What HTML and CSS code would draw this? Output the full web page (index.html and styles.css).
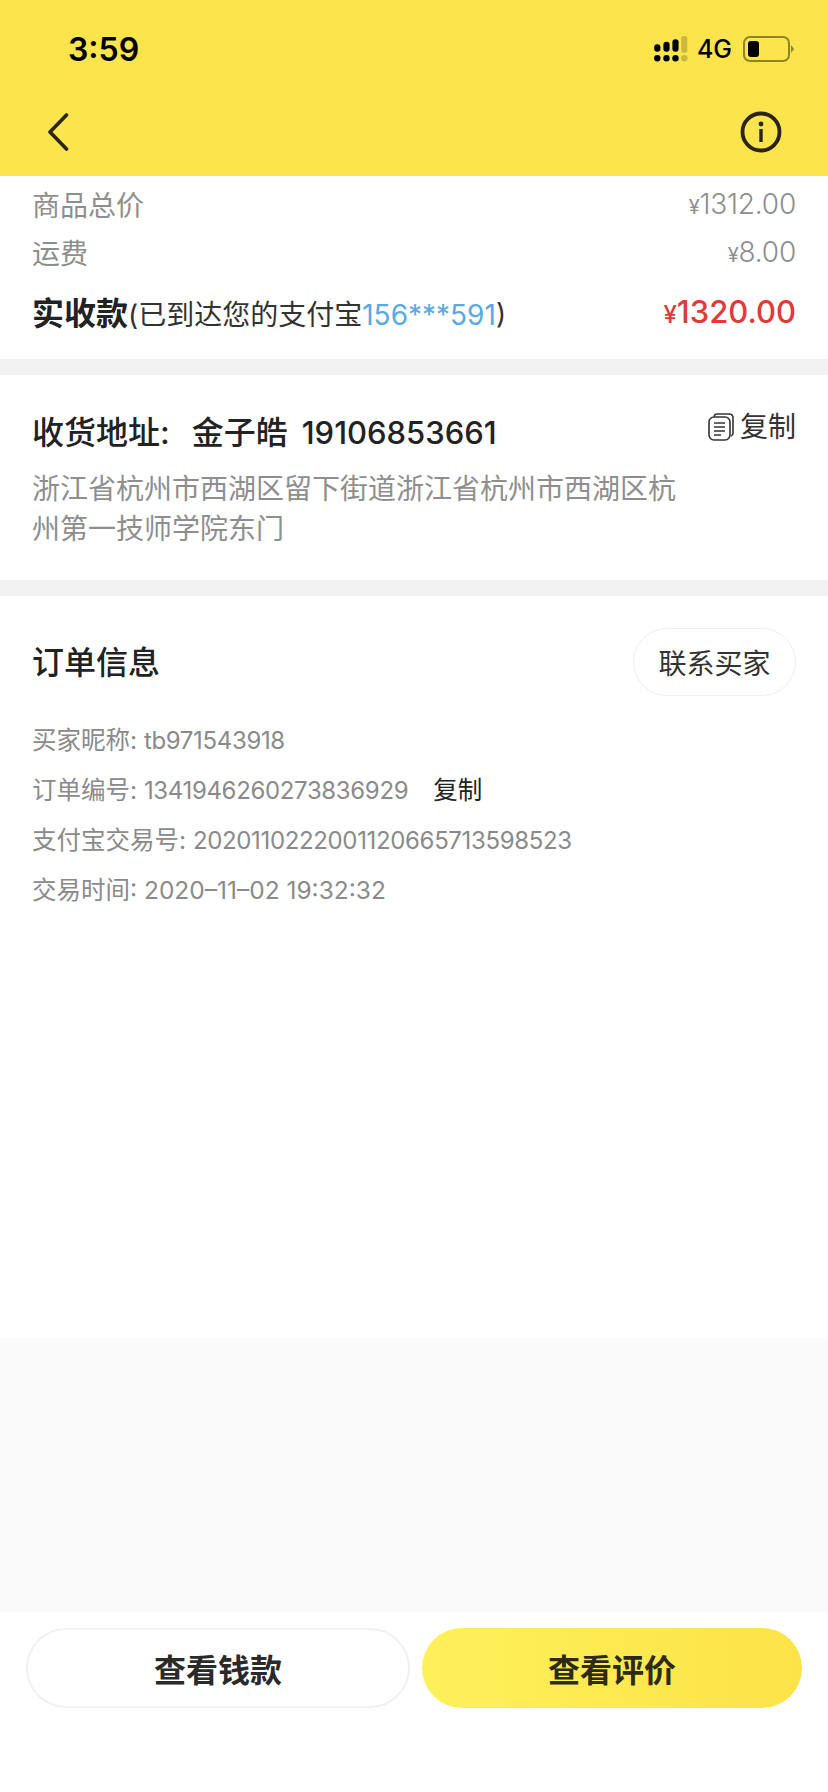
FILE: index.html
```html
<!DOCTYPE html>
<html lang="zh">
<head>
  <meta charset="UTF-8">
  <title>订单详情</title>
  <meta name="viewport" content="width=device-width, initial-scale=1">
  <link rel="stylesheet" href="styles.css">
</head>
<body>

<div class="page">
  <header class="top">
    <div class="status">
      <span class="time">3:59</span>
      <div class="status-right">
        <svg class="signal" width="34" height="26" viewBox="0 0 34 26">
          <g fill="#000">
            <rect x="0.200" y="8.300" width="6.200" height="7.400" rx="3"/><circle cx="3.300" cy="22.300" r="3.200"/>
            <rect x="9.400" y="5.700" width="6.200" height="10" rx="3"/><circle cx="12.500" cy="22.300" r="3.200"/>
            <rect x="18.400" y="3.300" width="6.200" height="12.400" rx="3"/><circle cx="21.500" cy="22.300" r="3.200"/>
          </g>
          <g fill="#c9b93f">
            <rect x="27.300" y="0" width="6" height="16.700" rx="2"/><circle cx="30.300" cy="22.300" r="3.200"/>
          </g>
        </svg>
        <span class="net">4G</span>
        <svg class="battery" width="51" height="26" viewBox="0 0 51 26">
          <rect x="1" y="1" width="45" height="24" rx="6" fill="none" stroke="#8f8425" stroke-width="2"/>
          <rect x="5" y="5" width="11" height="16" rx="3" fill="#000"/>
          <path d="M48 9l3 4-3 4z" fill="#8f8425"/>
        </svg>
      </div>
    </div>
    <nav class="nav">
      <svg width="24" height="40" viewBox="0 0 24 40">
        <path d="M18.500 3L2 20l16.500 17" fill="none" stroke="#2a2515" stroke-width="3.600" stroke-linecap="round" stroke-linejoin="round"/>
      </svg>
      <svg width="42" height="42" viewBox="0 0 42 42">
        <circle cx="21" cy="21" r="18.500" fill="none" stroke="#2a2515" stroke-width="3.800"/>
        <circle cx="21" cy="13" r="2.400" fill="#2a2515"/>
        <rect x="19.300" y="18" width="3.400" height="13" fill="#2a2515"/>
      </svg>
    </nav>
  </header>

  <section class="card price">
    <div class="row muted"><span>商品总价</span><span class="amount"><small>¥</small>1312.00</span></div>
    <div class="row muted"><span>运费</span><span class="amount"><small>¥</small>8.00</span></div>
    <div class="row total">
      <span><b>实收款</b>(已到达您的支付宝<a class="blue">156***591</a>)</span>
      <span class="red"><small>¥</small>1320.00</span>
    </div>
  </section>

  <section class="card address">
    <div class="addr-head">
      <h2>收货地址:<span class="name">金子皓</span><span class="phone">19106853661</span></h2>
      <div class="copy">
        <svg width="26" height="28" viewBox="0 0 26 28" fill="none" stroke="#333" stroke-width="1.600">
          <path d="M6 3.500C6.500 1.800 7.500 1 9 1h12c2.500 0 4 1.500 4 4v15c0 1.500-.5 2.500-2 3"/>
          <rect x="1" y="4" width="21" height="23" rx="5"/>
          <path d="M6 10h11M6 14h11M6 18h11M6 22h7"/>
        </svg>
        <span>复制</span>
      </div>
    </div>
    <p class="addr-text">浙江省杭州市西湖区留下街道浙江省杭州市西湖区杭州第一技师学院东门</p>
  </section>

  <section class="card info">
    <div class="info-head">
      <h2>订单信息</h2>
      <button class="contact">联系买家</button>
    </div>
    <ul class="info-list">
      <li>买家昵称: <span class="num">tb971543918</span></li>
      <li>订单编号: <span class="num">1341946260273836929</span><span class="info-copy">复制</span></li>
      <li>支付宝交易号: <span class="num">2020110222001120665713598523</span></li>
      <li>交易时间: 2020–11–02 19:32:32</li>
    </ul>
  </section>

  <div class="filler"></div>

  <footer class="bottom">
    <button class="btn">查看钱款</button>
    <button class="btn primary">查看评价</button>
  </footer>
</div>

</body>
</html>
```

FILE: styles.css
```css
* {
  box-sizing: border-box;
}

body {
  margin: 0;
  font-family: Inter, "Noto Sans CJK SC", sans-serif;
  background: #fff;
  color: #222;
}

.page {
  display: flex;
  flex-direction: column;
  width: 828px;
  height: 1792px;
  overflow: hidden;
  background: #f2f2f2;
}

.top {
  height: 176px;
  background: #fce44c;
  padding: 0 48px;
}

.status {
  display: flex;
  justify-content: space-between;
  align-items: center;
  height: 98px;
  margin-right: -14px;
  padding-left: 20px;
}

.time {
  font-size: 32px;
  font-weight: 600;
  color: #000;
}

.status-right {
  display: flex;
  align-items: center;
}

.signal {
  margin-right: 9px;
}

.net {
  font-size: 25px;
  font-weight: 500;
  color: #000;
  margin-right: 11px;
}

.nav {
  display: flex;
  justify-content: space-between;
  align-items: center;
  height: 36px;
  margin-right: -2px;
  margin-top: 16px;
}

.card {
  background: #fff;
  padding: 0 32px;
}

.row {
  display: flex;
  justify-content: space-between;
  align-items: center;
}

.price {
  height: 183px;
  padding-top: 4px;
}

.muted {
  height: 48px;
  font-size: 28px;
  color: #8e8e8e;
}

.amount {
  letter-spacing: -.2px;
  font-weight: 300;
}

.muted small {
  font-size: 20px;
  font-weight: 400;
}

.total {
  height: 60px;
  margin-top: 5px;
  font-size: 28px;
  color: #333;
}

.total b {
  font-size: 32px;
  font-weight: 600;
  color: #222;
}

.blue {
  color: #58a9e4;
}

.red {
  font-size: 31px;
  font-weight: 500;
  color: #e03b36;
}

.red small {
  font-size: 24px;
}

.address {
  height: 205px;
  margin-top: 16px;
  padding-top: 36px;
}

.addr-head {
  display: flex;
  justify-content: space-between;
  align-items: flex-start;
}

.address h2 {
  margin: 0;
  font-size: 32px;
  font-weight: 500;
  line-height: 44px;
}

.name {
  margin-left: 22px;
}

.phone {
  margin-left: 14px;
  font-size: 31px;
}

.copy {
  display: flex;
  align-items: center;
  gap: 6px;
  font-size: 28px;
  color: #333;
  line-height: 36px;
  margin-top: -2px;
}

.addr-text {
  width: 650px;
  margin: 14px 0 0;
  font-size: 28px;
  line-height: 40px;
  color: #8e8e8e;
}

.info {
  height: 742px;
  margin-top: 16px;
  padding-top: 32px;
}

.info-head {
  display: flex;
  justify-content: space-between;
  align-items: center;
}

.info h2 {
  margin: -4px 0 0;
  font-size: 32px;
  font-weight: 500;
}

.contact {
  width: 163px;
  height: 68px;
  border: 1.500px solid #f0f0f0;
  border-radius: 34px;
  background: #fff;
  color: #333;
  font: inherit;
  font-size: 28px;
  padding: 0;
}

.info-list {
  list-style: none;
  margin: 19px 0 0;
  padding: 0;
  font-size: 24.500px;
  color: #8a8a8a;
}

.info-list li {
  height: 50px;
  line-height: 50px;
}

.num {
  font-size: 24px;
  letter-spacing: -.35px;
}

.info-copy {
  margin-left: 25px;
  color: #222;
}

.filler {
  flex: 1;
  background: #fafafa;
}

.bottom {
  display: flex;
  gap: 12px;
  height: 180px;
  padding: 16px 26px 0;
  background: #fff;
}

.btn {
  flex: 1;
  height: 80px;
  border: 2px solid #f1f1f1;
  border-radius: 40px;
  background: #fff;
  color: #2a2a2a;
  font: inherit;
  font-size: 32px;
  font-weight: 600;
  padding: 0;
}

.primary {
  border: none;
  background: linear-gradient(90deg, #fef05a, #fce348);
  color: #2e2a14;
}
```
